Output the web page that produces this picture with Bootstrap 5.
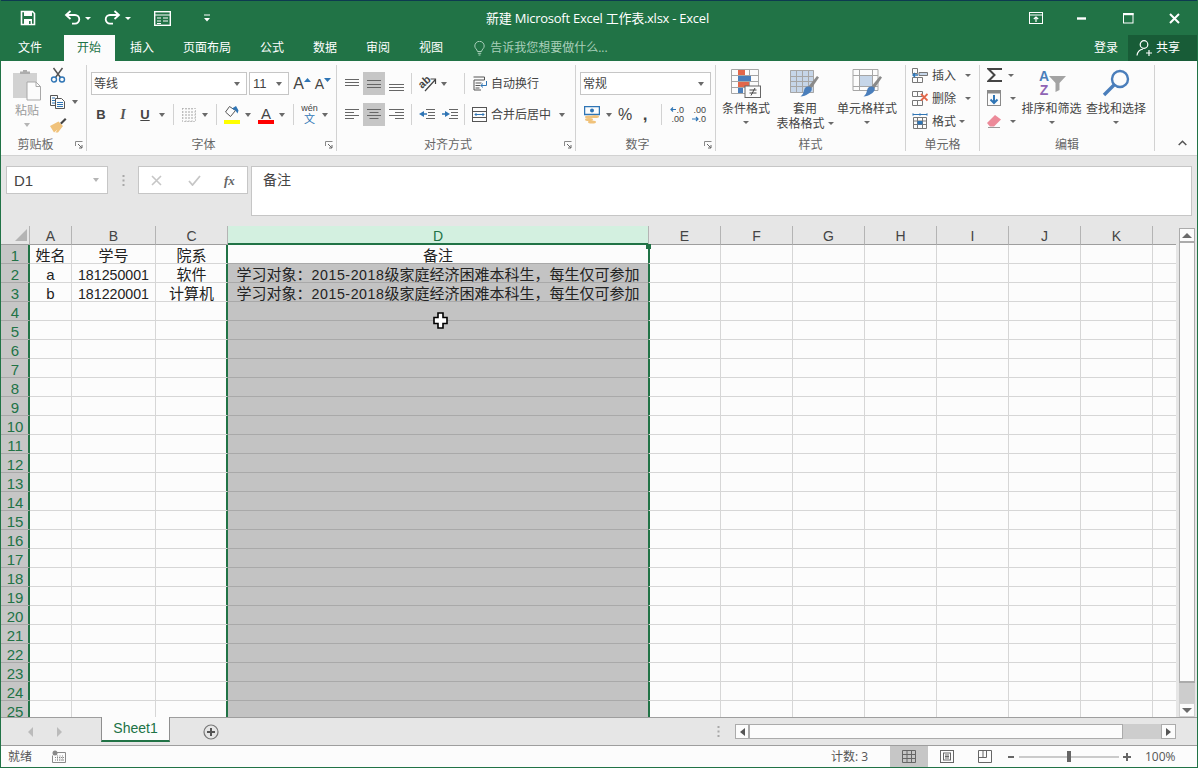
<!DOCTYPE html>
<html lang="zh-CN">
<head>
<meta charset="utf-8">
<title>新建 Microsoft Excel 工作表.xlsx - Excel</title>
<link href="https://cdn.jsdelivr.net/npm/bootstrap@5.3.0/dist/css/bootstrap.min.css" rel="stylesheet">
<style>
:root{--xg:#217346;--xd:#185c37;--xui:"Open Sans","Noto Sans CJK SC",sans-serif;--xcell:"Liberation Sans","Noto Sans CJK SC",sans-serif;}
html,body{margin:0;height:768px;overflow:hidden;background:#fff;}
svg{display:block;flex:none;}
.ov{overflow:visible;}
.xwin{width:1198px;height:768px;border-left:1px solid var(--xg);border-right:1px solid var(--xg);border-bottom:1px solid var(--xg);font-family:var(--xui);color:#444;font-size:12px;line-height:15px;}
.xtitle{height:35px;background:var(--xg);border-top:1px solid #0d3a50;color:#fff;}
.qa{width:300px;height:34px;}
.qa-a{margin-left:19px}.qa-b{margin-left:28px}.qa-c{margin-left:4px}.qa-d{margin-left:13px}.qa-e{margin-left:23px}.qa-h{margin-left:32px}
.wt{flex:1;text-align:center;font-size:13px;line-height:34px;margin-left:-3px;letter-spacing:-.25px;white-space:nowrap;}
.wc{width:300px;height:34px;justify-content:flex-end;}
.wc-a{margin-right:34px}.wc-b{margin-right:37px}.wc-c{margin-right:35px}.wc-d{margin-right:17px}
.ctr-w{border-style:solid;border-width:3px 3px 0;border-color:#fff transparent transparent;width:0;height:0;}
.xtabs{height:26px;background:var(--xg);color:#fff;padding-left:4px;line-height:26px;font-size:12px;}
.xt{padding:0 14px 0 13px;margin-right:2px;height:26px;}
.xt:first-child{margin-right:8px;}
.xt.on{background:#fcfcfc;color:var(--xg);}
.tell{color:#a9cfba;margin-left:15px;}
.tell svg{margin-right:5px;}
.signin{margin-left:auto;margin-right:10px;}
.share{width:69px;height:26px;background:var(--xd);padding-left:8px;}
.share svg{margin-right:2px;}
.xrib{height:95px;background:#fcfcfc;border-bottom:1px solid #d2d2d2;padding-top:4px;}
.gp{height:86px;border-right:1px solid #d2d2d2;flex:none;}
.g1{width:86px}.g2{width:250px}.g3{width:239px}.g4{width:140px}.g5{width:190px}.g6{width:74px}.g7{width:175px;}
.gb{height:72px;flex:none;}
.gl{height:14px;display:grid;grid-template-columns:1fr auto 1fr;color:#666;line-height:15px;text-align:center;font-size:12px;}
.gl.lw{grid-template-columns:1fr auto 1fr 16px;}
.gl svg{justify-self:end;margin:4px 3px 0 0;}
.rw{height:23px;display:flex;align-items:center;}
.rw-1{margin-top:7px}.rw-2{margin-top:8px}
.cl{display:flex;align-items:center;justify-content:center;height:23px;flex:none;}
.w6{width:6px}.w10{width:10px}.w12{width:12px}.w14{width:14px}.w16{width:16px}.w17{width:17px}.w18{width:18px}.w19{width:19px}.w21{width:21px}.w22{width:22px}.w23{width:23px}.w26{width:26px}.w30{width:30px}.w45{width:45px}.w58{width:58px}.w60{width:60px}.w61{width:61px}.w66{width:66px}.w68{width:68px}
.p3{padding-left:3px}.p4{padding-left:4px}
.vs{width:1px;height:21px;background:#d2d2d2;}
.crt{display:block;width:0;height:0;border-style:solid;border-width:4px 3.5px 0;border-color:#6a6a6a transparent transparent;flex:none;}
.combo{height:23px;background:#fff;border:1px solid #c6c6c6;font-size:12px;line-height:21px;display:flex;align-items:center;justify-content:space-between;padding:0 6px 0 2px;flex:none;}
.cb-font{width:156px;margin-left:1px}.cb-size{width:40px;margin-left:2px;padding-left:3px;}
.cb-num{width:131px;margin-left:4px;}
.tb{font-family:"Liberation Sans",sans-serif;font-size:13px;color:#444;line-height:15px;}
.tb-b{font-weight:700}.tb-i{font-style:italic;font-family:"Liberation Serif",serif;font-weight:700;font-size:14px;color:#555}.tb-u{font-weight:700;text-decoration:underline;}
.afont{font-family:"Liberation Sans",sans-serif;color:#444;line-height:16px;}
.afont.lg{font-size:16px}.afont.sm{font-size:14px;}
.afont.hv{font-weight:700;font-size:17px;}
.wen{display:flex;flex-direction:column;align-items:center;font-family:"Liberation Sans","Noto Sans CJK SC",sans-serif;color:#444;}
.wen span{display:block;font-size:9px;line-height:10px;}
.wen b{display:block;font-weight:400;font-size:11px;line-height:13px;color:#2f75b5;}
.on-g{background:#c6c6c6;}
.ml-i{margin-left:4px;}
.p-col{width:44px;margin-left:4px;display:flex;flex-direction:column;align-items:center;flex:none;}
.p-ic{margin-top:3px;height:34px;}
.p-t{color:#9b9b9b;margin-top:1px;font-size:12px;line-height:15px;margin-bottom:5px;}
.crt.dim{border-top-color:#b5b5b5;}
.s-col{display:flex;flex-direction:column;flex:none;margin-left:1px;}
.s-a{margin-top:2px}.s-b{margin-top:11px;display:flex;align-items:center;}.s-c{margin-top:8px;}
.s-b .crt{margin-left:6px;}
.big{display:flex;flex-direction:column;align-items:center;flex:none;line-height:15px;font-size:12px;color:#444;}
.big svg{margin:3px 0 3px;height:30px;}
.big .crt{margin-top:5px;border-width:3.5px 3px 0;}
.big .tl{display:flex;align-items:center;}
.big .tl .crt{margin:0 0 0 3px;}
.c-row{height:20px;display:flex;align-items:center;padding-left:6px;margin-top:3px;}
.c-row:first-child{margin-top:0;}
.c-row svg{margin-right:4px;}
.c-row .crt{margin-left:9px;border-width:3.5px 3px 0;}
.c-row.alt .crt{margin-left:3px;}
.e-row svg{margin-right:5px;}
.e-col{width:41px;flex:none;}
.e-row{padding-left:7px;}
.e-row .crt{margin-left:0;}
.chev{flex:1;display:flex;justify-content:flex-end;align-items:flex-end;padding:0 10px 5px 0;height:86px;}
.xfx{height:70px;background:#e6e6e6;padding:10px 5px 0 5px;flex:none;}
.nbox{width:102px;height:28px;background:#fff;border:1px solid #c6c6c6;font-family:"Liberation Sans",sans-serif;font-size:15px;color:#444;padding:0 8px 0 7px;display:flex;align-items:center;justify-content:space-between;}
.fdots{width:30px;height:28px;display:flex;align-items:center;justify-content:center;}
.fbtn{width:110px;height:28px;background:#fff;border:1px solid #c6c6c6;display:flex;align-items:center;padding-left:12px;}
.fbtn svg{margin-right:26px;}
.fbtn em{font-family:"Liberation Serif",serif;font-style:italic;font-weight:700;font-size:13px;color:#666;margin-left:-3px;}
.finp{flex:1;height:50px;margin-left:3px;background:#fff;border:1px solid #c6c6c6;padding:4px 11px;font-family:var(--xcell);font-size:14px;line-height:18px;color:#444;}
.xsh{height:491px;flex:none;position:relative;}
.tw{width:1175px;height:491px;overflow:hidden;background:#fcfcfc;}
.gt{border-collapse:separate;border-spacing:0;table-layout:fixed;width:1176px;font-family:var(--xcell);color:#222;}
.c29{width:29px}.c42{width:42px}.c84{width:84px}.c72{width:72px}.c421{width:421px}.c24{width:24px}
.gt th,.gt td{height:19px;padding:2px 0 0;text-align:center;white-space:nowrap;overflow:hidden;line-height:15px;font-weight:400;}
.gt td{border-right:1px solid #d6d6d6;border-bottom:1px solid #d6d6d6;font-size:15px;}
.gt thead th{background:#e6e6e6;border-right:1px solid #b4b4b4;border-bottom:1px solid #9e9e9e;font-size:14px;color:#444;}
.gt thead .cnr{padding:0;}
.gt thead .cnr svg{margin-left:14px;}
.gt thead .hd{background:#d3f0e0;color:var(--xg);border-right-color:#b4b4b4;border-bottom-color:var(--xg);box-shadow:inset 0 -1px 0 var(--xg);}
.gt tbody th{background:#c6c6c6;border-right:1px solid var(--xg);border-bottom:1px solid #a8a8a8;box-shadow:inset -1px 0 0 var(--xg);font-size:15px;color:var(--xg);}
.gt tbody .cc{border-right-color:var(--xg);box-shadow:inset -1px 0 0 var(--xg);}
.gt tbody .cd{border-right-color:var(--xg);background:#c3c3c3;border-bottom-color:#a9a9a9;}
.gt tbody .cd1{background:#fcfcfc;border-right-color:var(--xg);border-bottom-color:#a9a9a9;position:relative;overflow:visible;}
.gt tbody .ce{box-shadow:inset 1px 0 0 var(--xg);}
.gt tbody .cz{border-right-color:#9e9e9e;}
.dg{font-size:14.2px;line-height:10px;}
.dg2{font-size:14.2px;letter-spacing:.55px;line-height:10px;}
.pn{font-family:"Noto Sans CJK TC",sans-serif;line-height:10px;}
.handle{position:absolute;right:-3px;top:-1px;width:5px;height:5px;background:var(--xg);}
.ccur{position:absolute;left:432px;top:86px;}
.vbar{width:21px;height:491px;background:#e6e6e6;padding:2px 0 0 3px;flex:none;}
.vb-btn{width:16px;height:15px;background:#fcfcfc;border:1px solid #ababab;display:flex;align-items:center;justify-content:center;}
.vb-up{border-bottom-width:2px;}
.vb-th{width:16px;height:440px;background:#fcfcfc;border:1px solid #ababab;border-top:0;border-bottom-width:2px;}
.vb-tr{width:16px;height:20px;background:#cdcdcd;}
.vb-dn{height:14px;border-color:#d0d0d0;border-width:1px;}
.tri-u{width:0;height:0;border-style:solid;border-width:0 5px 5px;border-color:transparent transparent #6a6a6a;}
.tri-d{width:0;height:0;border-style:solid;border-width:5px 5px 0;border-color:#6a6a6a transparent transparent;}
.tri-l{width:0;height:0;border-style:solid;border-width:4px 5px 4px 0;border-color:transparent #555 transparent transparent;}
.tri-r{width:0;height:0;border-style:solid;border-width:4px 0 4px 5px;border-color:transparent transparent transparent #555;}
.tri-l.dim{border-right-color:#bbb;border-width:5px 5px 5px 0;}
.tri-r.dim{border-left-color:#bbb;border-width:5px 0 5px 5px;}
.xtb{height:28px;background:#e6e6e6;border-top:1px solid #9e9e9e;flex:none;}
.xnav{width:100px;padding-left:27px;height:27px;}
.xnav .tri-r{margin-left:24px;}
.stab{width:69px;height:25px;margin-top:-1px;background:#fcfcfc;border-left:1px solid #8f8f8f;border-right:1px solid #8f8f8f;border-bottom:2px solid var(--xg);color:var(--xg);font-family:"Liberation Sans",sans-serif;font-size:14px;line-height:22px;text-align:center;position:relative;}
.addb{margin-left:33px;}
.xdots{margin-left:498px;}
.hsc{margin-left:15px;width:441px;height:15px;background:#cdcdcd;display:flex;margin-top:6px;}
.hb{width:15px;height:15px;background:#fcfcfc;border:1px solid #ababab;display:flex;align-items:center;justify-content:center;flex:none;}
.hb-l{border-right-width:2px}
.hth{width:373px;height:15px;background:#fcfcfc;border:1px solid #ababab;border-left:0;flex:none;}
.hb-r{margin-left:auto;border-left-width:1px;}
.xst{height:22px;background:#fcfcfc;border-top:1px solid #9e9e9e;flex:none;color:#555;}
.xst .st-r{margin-left:7px;width:24px;}
.st-mac{margin-left:20px;}
.st-cnt{margin-left:765px;width:59px;}
.st-v{width:38px;height:21px;display:flex;align-items:center;justify-content:center;}
.st-v.on{background:#c6c6c6;}
.st-z{margin-left:4px;}
.st-pc{font-family:"Open Sans",sans-serif;margin-left:14px;font-size:12px;}
</style>
</head>
<body>
<div class="xwin d-flex flex-column">

<div class="xtitle d-flex flex-none">
  <div class="qa d-flex align-items-center">
    <svg class="qa-a" width="16" height="16" viewBox="0 0 16 16"><path d="M1.500 1.500h11l2 2v11h-13z" fill="none" stroke="#fff" stroke-width="1.600"/><rect x="4" y="1" width="8" height="5" fill="#fff"/><rect x="4" y="9" width="8" height="5.500" fill="#fff"/><rect x="9" y="11" width="1.600" height="3" fill="#217346"/></svg>
    <svg class="qa-b" width="17" height="16" viewBox="0 0 17 16"><path d="M2 5h9a4.200 4.200 0 0 1 0 8.600H8" fill="none" stroke="#fff" stroke-width="1.800"/><path d="M6.500 1 2 5l4.500 4" fill="none" stroke="#fff" stroke-width="1.800"/></svg>
    <span class="ctr-w qa-c"></span>
    <svg class="qa-d" width="17" height="16" viewBox="0 0 17 16"><path d="M15 5H6a4.200 4.200 0 0 0 0 8.600h3" fill="none" stroke="#fff" stroke-width="1.800"/><path d="M10.500 1 15 5l-4.500 4" fill="none" stroke="#fff" stroke-width="1.800"/></svg>
    <span class="ctr-w qa-c"></span>
    <svg class="qa-e" width="17" height="15" viewBox="0 0 17 15"><rect x=".7" y=".7" width="15.600" height="13.600" fill="none" stroke="#fff" stroke-width="1.400"/><path d="M1 4h15M3 7h4M3 10h4M9 7h5M9 10h5M3 12.500h4" stroke="#fff" stroke-width="1.200"/></svg>
    <svg class="qa-h" width="8" height="8" viewBox="0 0 8 8"><path d="M1 1h6" stroke="#fff"/><path d="M1 4h6L4 7.500z" fill="#fff"/></svg>
  </div>
  <div class="wt">新建 Microsoft Excel 工作表.xlsx - Excel</div>
  <div class="wc d-flex align-items-center">
    <svg class="wc-a" width="14" height="12" viewBox="0 0 14 12"><rect x=".5" y=".5" width="13" height="11" fill="none" stroke="#fff"/><path d="M1 3h12" stroke="#fff"/><path d="M7 10V5M4.800 7 7 5l2.200 2" fill="none" stroke="#fff" stroke-width="1.200"/></svg>
    <svg class="wc-b" width="9" height="3" viewBox="0 0 9 3"><rect width="9" height="2.400" y=".3" fill="#fff"/></svg>
    <svg class="wc-c" width="11" height="11" viewBox="0 0 11 11"><rect x=".5" y=".5" width="9.500" height="9.500" fill="none" stroke="#fff"/><rect width="10.500" height="2.200" fill="#fff"/></svg>
    <svg class="wc-d" width="11" height="11" viewBox="0 0 11 11"><path d="M1 1l9 9M10 1l-9 9" stroke="#fff" stroke-width="2"/></svg>
  </div>
</div>

<div class="xtabs d-flex flex-none">
  <div class="xt">文件</div><div class="xt on">开始</div><div class="xt">插入</div><div class="xt">页面布局</div><div class="xt">公式</div><div class="xt">数据</div><div class="xt">审阅</div><div class="xt">视图</div>
  <div class="tell d-flex align-items-center">
    <svg width="11" height="15" viewBox="0 0 11 15"><path d="M3.500 10.500C3 8 .8 7.500.8 5a4.700 4.700 0 0 1 9.400 0c0 2.500-2.200 3-2.700 5.500z" fill="none" stroke="#a9cfba"/><path d="M3.800 12.300h3.400M4.500 14h2" stroke="#a9cfba"/></svg>
    <span>告诉我您想要做什么...</span>
  </div>
  <div class="signin">登录</div>
  <div class="share d-flex align-items-center">
    <svg width="18" height="18" viewBox="0 0 18 18"><circle cx="8" cy="5.500" r="3.800" fill="none" stroke="#fff" stroke-width="1.200"/><path d="M1 16.500c.5-4 3-6 6-6.500" fill="none" stroke="#fff" stroke-width="1.200"/><path d="M13 11v6M10 14h6" stroke="#fff" stroke-width="1.200"/></svg>
    <span>共享</span>
  </div>
</div>

<div class="xrib d-flex flex-none">
  <div class="gp g1 d-flex flex-column">
    <div class="gb d-flex">
      <div class="p-col">
        <svg class="p-ic" width="30" height="32" viewBox="0 0 30 32"><rect x="1" y="4" width="24" height="25" fill="#d2d2d2"/><path d="M8 5V2.500h3V1h4v1.500h3V5z" fill="#adadad"/><path d="M15 13h9l4.500 4.500V31H15z" fill="#fcfcfc" stroke="#a8a8a8"/><path d="M24 13v4.500h4.500" fill="none" stroke="#a8a8a8"/></svg>
        <div class="p-t">粘贴</div>
        <span class="crt dim"></span>
      </div>
      <div class="s-col">
        <svg class="s-a" width="16" height="16" viewBox="0 0 16 16"><path d="M3.500 1 10.500 10.500M12.500 1 5.500 10.500" stroke="#555" stroke-width="1.500"/><circle cx="4" cy="12.500" r="2.500" fill="none" stroke="#2f75b5" stroke-width="1.400"/><circle cx="12" cy="12.500" r="2.500" fill="none" stroke="#2f75b5" stroke-width="1.400"/></svg>
        <div class="s-b">
          <svg width="16" height="15" viewBox="0 0 16 15"><path d="M.5 1.500h7v10h-7z" fill="#fcfcfc" stroke="#555"/><path d="M5.500 4.500h6l3 3v7h-9z" fill="#fcfcfc" stroke="#555"/><path d="M2 4h3M2 6.500h3M2 9h3M7 8.500h6M7 10.500h6M7 12.500h6" stroke="#2f75b5"/></svg>
          <span class="crt"></span>
        </div>
        <svg class="s-c" width="17" height="16" viewBox="0 0 17 16"><path d="M10 6 15 1l1.500 1.500-5 5z" fill="#444"/><path d="M8.500 4.500 13 9l-5 6.500H5.500l2-3-3.500 3L0 9z" fill="#f0c27b"/></svg>
      </div>
    </div>
    <div class="gl lw"><span></span><span>剪贴板</span><span></span><svg width="8" height="8" viewBox="0 0 8 8"><path d="M.5 5V.5H7.500" fill="none" stroke="#8a8a8a"/><path d="M3 3l4 4M4 7h3V4" fill="none" stroke="#666"/></svg></div>
  </div>

  <div class="gp g2 d-flex flex-column">
    <div class="gb p3">
      <div class="rw rw-1">
        <div class="combo cb-font"><span>等线</span><span class="crt"></span></div>
        <div class="combo cb-size"><span class="tb">11</span><span class="crt"></span></div>
        <div class="cl w26"><span class="afont lg">A</span><svg width="7" height="12" viewBox="0 0 7 12"><path d="M0 4 3.500 0 7 4z" fill="#2f75b5"/></svg></div>
        <div class="cl w16"><span class="afont sm">A</span><svg width="7" height="12" viewBox="0 0 7 12"><path d="M0 0h7L3.500 4z" fill="#2f75b5"/></svg></div>
      </div>
      <div class="rw rw-2">
        <div class="cl w22"><span class="tb tb-b">B</span></div>
        <div class="cl w22"><span class="tb tb-i">I</span></div>
        <div class="cl w22"><span class="tb tb-u">U</span></div>
        <div class="cl w12"><span class="crt"></span></div>
        <div class="cl w10"><span class="vs"></span></div>
        <div class="cl w21"><svg width="14" height="14" viewBox="0 0 14 14"><path d="M.5.500h13v13H.5zM.5 7h13M7 .5v13M4 .5v13M10 .5v13M.5 4h13M.5 10h13" fill="none" stroke="#999" stroke-dasharray="1 2"/></svg></div>
        <div class="cl w12"><span class="crt"></span></div>
        <div class="cl w10"><span class="vs"></span></div>
        <div class="cl w22"><svg width="16" height="19" viewBox="0 0 16 19"><path d="M5.500 1.500 1.500 7l5 4.500 5-6z" fill="#fcfcfc" stroke="#555"/><path d="M8 3.500 12 1l2.500 4.500-1 3-2-3z" fill="#2f75b5"/><rect y="15" width="16" height="4" fill="#ff0"/></svg></div>
        <div class="cl w10"><span class="crt"></span></div>
        <div class="cl w26"><svg width="16" height="19" viewBox="0 0 16 19"><text x="8" y="14" text-anchor="middle" font-family="Liberation Sans" font-size="15" fill="#444">A</text><rect y="15" width="16" height="4" fill="#f00"/></svg></div>
        <div class="cl w6"><span class="crt"></span></div>
        <div class="cl w16"><span class="vs"></span></div>
        <div class="cl w17"><div class="wen"><span>wén</span><b>文</b></div></div>
        <div class="cl w14"><span class="crt"></span></div>
      </div>
    </div>
    <div class="gl lw"><span></span><span>字体</span><span></span><svg width="8" height="8" viewBox="0 0 8 8"><path d="M.5 5V.5H7.500" fill="none" stroke="#8a8a8a"/><path d="M3 3l4 4M4 7h3V4" fill="none" stroke="#666"/></svg></div>
  </div>

  <div class="gp g3 d-flex flex-column">
    <div class="gb p4">
      <div class="rw rw-1">
        <div class="cl w22"><svg width="14" height="14" viewBox="0 0 14 14"><path d="M0 2.500h14M0 5.500h14M0 8.500h14" stroke="#666"/></svg></div>
        <div class="cl w22 on-g"><svg width="14" height="14" viewBox="0 0 14 14"><path d="M0 3.500h14M0 7.500h14M0 10.500h14" stroke="#666"/></svg></div>
        <div class="cl w23"><svg width="15" height="14" viewBox="0 0 15 14"><path d="M0 7.500h15M0 10.500h15M0 13.500h15" stroke="#666"/></svg></div>
        <div class="cl w6"><span class="vs"></span></div>
        <div class="cl w45 justify-content-start"><svg class="ml-i ov" width="19" height="17" viewBox="0 0 19 17"><text x="1" y="12" transform="rotate(-42 5 9)" font-family="Liberation Sans" font-weight="700" font-size="11" fill="#444">ab</text><path d="M7 16 17 5M12.500 4H17.500V9" fill="none" stroke="#444" stroke-width="1.200"/></svg><span class="crt ml-i"></span></div>
        <div class="cl w10"><span class="vs"></span></div>
        <div class="cl p3"><svg width="15" height="15" viewBox="0 0 15 15"><path d="M1.500 1h11v3H2v10h7M3.500 7h6M3.500 9.500h5M3.500 12h4" fill="none" stroke="#555"/><path d="M14.500 5v4.500H9M11 7.500 8.800 9.500l2.200 2" fill="none" stroke="#2f75b5"/></svg></div>
        <div class="ml-i">自动换行</div>
      </div>
      <div class="rw rw-2">
        <div class="cl w22"><svg width="14" height="13" viewBox="0 0 14 13"><path d="M0 1.500h14M0 4.500h9M0 7.500h14M0 10.500h9" stroke="#666"/></svg></div>
        <div class="cl w22 on-g"><svg width="14" height="13" viewBox="0 0 14 13"><path d="M0 1.500h14M2.500 4.500h9M0 7.500h14M2.500 10.500h9" stroke="#666"/></svg></div>
        <div class="cl w23"><svg width="15" height="13" viewBox="0 0 15 13"><path d="M0 1.500h15M6 4.500h9M0 7.500h15M6 10.500h9" stroke="#666"/></svg></div>
        <div class="cl w6"><span class="vs"></span></div>
        <div class="cl w26"><svg width="16" height="13" viewBox="0 0 16 13"><path d="M7 1.500h9M9 4.500h7M9 7.500h7M7 10.500h9" stroke="#666"/><path d="M5 3v6L0 6z" fill="#2f75b5"/><path d="M3 6h5" stroke="#2f75b5" stroke-width="1.500"/></svg></div>
        <div class="cl w19"><svg width="16" height="13" viewBox="0 0 16 13"><path d="M7 1.500h9M9 4.500h7M9 7.500h7M7 10.500h9" stroke="#666"/><path d="M3 3v6l5-3z" fill="#2f75b5"/><path d="M0 6h5" stroke="#2f75b5" stroke-width="1.500"/></svg></div>
        <div class="cl w10"><span class="vs"></span></div>
        <div class="cl p3"><svg width="15" height="15" viewBox="0 0 15 15"><rect x=".5" y=".5" width="14" height="14" fill="none" stroke="#555"/><path d="M1 4.500h13M1 10.500h13" stroke="#555"/><path d="M3 7.500h9M4.500 6 3 7.500 4.500 9M10.500 6 12 7.500 10.500 9" fill="none" stroke="#2f75b5"/></svg></div>
        <div class="ml-i">合并后居中</div>
        <span class="crt ms-2"></span>
      </div>
    </div>
    <div class="gl lw"><span></span><span>对齐方式</span><span></span><svg width="8" height="8" viewBox="0 0 8 8"><path d="M.5 5V.5H7.500" fill="none" stroke="#8a8a8a"/><path d="M3 3l4 4M4 7h3V4" fill="none" stroke="#666"/></svg></div>
  </div>

  <div class="gp g4 d-flex flex-column">
    <div class="gb">
      <div class="rw rw-1">
        <div class="combo cb-num"><span>常规</span><span class="crt"></span></div>
      </div>
      <div class="rw rw-2">
        <div class="cl w30 justify-content-start">
          <svg class="ms-2" width="16" height="18" viewBox="0 0 16 18"><rect x=".5" y=".5" width="15" height="8" fill="#fcfcfc" stroke="#2f75b5" stroke-width="1.500"/><circle cx="8" cy="4.500" r="2" fill="#2f75b5"/><ellipse cx="5" cy="11" rx="4" ry="1.500" fill="#f0c27b"/><ellipse cx="5" cy="13.500" rx="4" ry="1.500" fill="#f0c27b"/><ellipse cx="11" cy="10.500" rx="4" ry="1.500" fill="#f0c27b"/><ellipse cx="8" cy="16" rx="4" ry="1.500" fill="#f0c27b"/></svg>
        </div>
        <div class="cl w6"><span class="crt"></span></div>
        <div class="cl w26"><span class="afont lg">%</span></div>
        <div class="cl w14"><span class="afont hv">,</span></div>
        <div class="cl w18"><span class="vs"></span></div>
        <svg class="ov" width="14" height="17" viewBox="0 0 14 17"><text x="14" y="7" text-anchor="end" font-family="Liberation Sans" font-size="9" fill="#444">.0</text><text x="14" y="16" text-anchor="end" font-family="Liberation Sans" font-size="9" fill="#444">.00</text><path d="M1 3.500h5M3 1.500 1 3.500l2 2" fill="none" stroke="#2f75b5" stroke-width="1.200"/></svg>
        <svg class="ms-2 ov" width="14" height="17" viewBox="0 0 14 17"><text x="14" y="7" text-anchor="end" font-family="Liberation Sans" font-size="9" fill="#444">.00</text><text x="14" y="16" text-anchor="end" font-family="Liberation Sans" font-size="9" fill="#444">.0</text><path d="M0 13h6M4 11l2 2-2 2" fill="none" stroke="#2f75b5" stroke-width="1.200"/></svg>
      </div>
    </div>
    <div class="gl lw"><span></span><span>数字</span><span></span><svg width="8" height="8" viewBox="0 0 8 8"><path d="M.5 5V.5H7.500" fill="none" stroke="#8a8a8a"/><path d="M3 3l4 4M4 7h3V4" fill="none" stroke="#666"/></svg></div>
  </div>

  <div class="gp g5 d-flex flex-column">
    <div class="gb d-flex">
      <div class="big w60">
        <svg width="32" height="30" viewBox="0 0 32 30"><path d="M1.500 1.500h27v24h-27zM1.500 7.500h27M1.500 13.500h27M1.500 19.500h27M10.500 1.500v24M19.500 1.500v24" fill="none" stroke="#a6a6a6"/><rect x="8" y="2" width="7" height="5" fill="#e2674a"/><rect x="8" y="8" width="13" height="5" fill="#4a7ebb"/><rect x="8" y="14" width="11" height="5" fill="#e2674a"/><rect x="8" y="20" width="5" height="5" fill="#4a7ebb"/><rect x="15" y="18" width="15.500" height="11.500" fill="#fcfcfc" stroke="#666"/><path d="M19.500 22h7M19.500 25h7M25 20l-4 7.500" stroke="#444"/></svg>
        <span>条件格式</span>
        <span class="crt"></span>
      </div>
      <div class="big w58">
        <svg width="32" height="30" viewBox="0 0 32 30"><rect x="1" y="2" width="24" height="23" fill="#c6d6e9"/><path d="M1.500 2.500h23v22h-23zM1.500 8.500h23M1.500 13.500h23M1.500 18.500h23M7.500 2.500v22M13.500 2.500v22M19.500 2.500v22" fill="none" stroke="#a6a6a6"/><path d="M19 19l9-11 2 1.500L22 21z" fill="#8a8a8a"/><path d="M19 18.500c3 0 4.500 2 3.500 4s-5 5.500-11 6c2-1.500 3-3.500 3.500-6 .5-2.500 2-4 4-4z" fill="#4a7ebb"/></svg>
        <span class="tl">套用</span>
        <span class="tl">表格格式<span class="crt"></span></span>
      </div>
      <div class="big w66">
        <svg width="32" height="30" viewBox="0 0 32 30"><path d="M2 1.500h25v21H2zM2 7.500h25M8.500 1.500v21M21.500 1.500v21" fill="none" stroke="#a6a6a6"/><rect x="9" y="8" width="12" height="10" fill="#c6d6e9"/><path d="M2 18.500h25" stroke="#a6a6a6"/><path d="M20 19l9-11 2 1.500L23 21z" fill="#8a8a8a"/><path d="M20 18.500c3 0 4.500 2 3.500 4s-5 5.500-11 6c2-1.500 3-3.500 3.500-6 .5-2.500 2-4 4-4z" fill="#4a7ebb"/></svg>
        <span>单元格样式</span>
        <span class="crt"></span>
      </div>
    </div>
    <div class="gl"><span></span><span>样式</span><span></span></div>
  </div>

  <div class="gp g6 d-flex flex-column">
    <div class="gb">
      <div class="c-row">
        <svg width="16" height="16" viewBox="0 0 16 16"><path d="M.5 1.500h5v5h-5zM.5 10.500h5v5h-5zM5.500 10.500h5v5h-5z" fill="none" stroke="#777"/><path d="M7 5.500h8.500v3H7z" fill="#c6d6e9" stroke="#777"/><path d="M1 8h5M3 6 1 8l2 2" fill="none" stroke="#2f75b5" stroke-width="1.400"/></svg>
        <span>插入</span><span class="crt"></span>
      </div>
      <div class="c-row">
        <svg width="16" height="16" viewBox="0 0 16 16"><path d="M.5 1.500h5v5h-5zM.5 10.500h5v5h-5zM5.500 10.500h5v5h-5zM5.500 1.500h5v5h-5z" fill="none" stroke="#777"/><path d="M9 4l6.500 6.500M15.500 4 9 10.500" stroke="#e2674a" stroke-width="1.800"/></svg>
        <span>删除</span><span class="crt"></span>
      </div>
      <div class="c-row alt">
        <svg width="16" height="16" viewBox="0 0 16 16"><path d="M1 1.500h14M1 .3v2.400M15 .3v2.400M8 .3v2.400" fill="none" stroke="#2f75b5"/><path d="M1.500 4.500h13v11h-13zM1.500 8h13M1.500 11.500h13M5.500 4.500v11M10.500 4.500v11" fill="none" stroke="#777"/><rect x="5.500" y="8" width="5" height="3.500" fill="#2f75b5"/></svg>
        <span>格式</span><span class="crt"></span>
      </div>
    </div>
    <div class="gl"><span></span><span>单元格</span><span></span></div>
  </div>

  <div class="gp g7 d-flex flex-column">
    <div class="gb d-flex">
      <div class="e-col">
        <div class="c-row e-row"><svg width="16" height="14" viewBox="0 0 16 14"><path d="M15 1H1.500l6 6-6 6H15" fill="none" stroke="#444" stroke-width="2"/></svg><span class="crt"></span></div>
        <div class="c-row e-row"><svg width="14" height="16" viewBox="0 0 14 16"><rect x=".5" y=".5" width="13" height="15" fill="#fcfcfc" stroke="#8a8a8a"/><rect x="1" y="1" width="12" height="2.500" fill="#8a8a8a"/><path d="M7 5v8M3.500 9.500 7 13l3.500-3.500" fill="none" stroke="#2f75b5" stroke-width="2"/></svg><span class="crt ms-1"></span></div>
        <div class="c-row e-row"><svg width="14" height="14" viewBox="0 0 14 14"><path d="M0 9 8 1l6 4.500-7 7H3z" fill="#ec8a99"/><path d="M1 13.500h12" stroke="#999"/></svg><span class="crt ms-1"></span></div>
      </div>
      <div class="big w61">
        <svg class="ov" width="32" height="30" viewBox="0 0 32 30"><text x="8" y="13" text-anchor="middle" font-family="Liberation Sans" font-weight="700" font-size="14" fill="#4a7ebb">A</text><text x="8" y="27" text-anchor="middle" font-family="Liberation Sans" font-weight="700" font-size="14" fill="#8f64b4">Z</text><path d="M13 8h17l-6.500 7v7l-4 2v-9z" fill="#a3a3a3"/></svg>
        <span>排序和筛选</span>
        <span class="crt"></span>
      </div>
      <div class="big w68">
        <svg width="32" height="30" viewBox="0 0 32 30"><circle cx="20" cy="11" r="8" fill="none" stroke="#4a7ebb" stroke-width="2.400"/><path d="M14 17 4 27" stroke="#4a7ebb" stroke-width="3.400"/></svg>
        <span>查找和选择</span>
        <span class="crt"></span>
      </div>
    </div>
    <div class="gl"><span></span><span>编辑</span><span></span></div>
  </div>
  <div class="chev"><svg width="9" height="6" viewBox="0 0 9 6"><path d="M.7 5 4.500 1.200 8.300 5" fill="none" stroke="#555" stroke-width="1.500"/></svg></div>
</div>

<div class="xfx d-flex">
  <div class="nbox"><span>D1</span><span class="crt dim"></span></div>
  <div class="fdots"><svg width="3" height="11" viewBox="0 0 3 11"><path d="M1.500 0v2M1.500 4.500v2M1.500 9v2" stroke="#a8a8a8" stroke-width="2"/></svg></div>
  <div class="fbtn">
    <svg width="11" height="11" viewBox="0 0 11 11"><path d="M1 1l9 9M10 1l-9 9" stroke="#c6c6c6" stroke-width="1.600"/></svg>
    <svg width="13" height="11" viewBox="0 0 13 11"><path d="M1 6l3.500 4L12 1" fill="none" stroke="#c6c6c6" stroke-width="1.800"/></svg>
    <em>fx</em>
  </div>
  <div class="finp">备注</div>
</div>

<div class="xsh d-flex">
  <div class="tw">
    <table class="gt">
      <colgroup><col class="c29"><col class="c42"><col class="c84"><col class="c72"><col class="c421"><col class="c72"><col class="c72"><col class="c72"><col class="c72"><col class="c72"><col class="c72"><col class="c72"><col class="c24"></colgroup>
      <thead><tr><th class="cnr"><svg width="12" height="12" viewBox="0 0 12 12"><path d="M0 12 12 0v12z" fill="#b4b4b4"/></svg></th><th>A</th><th>B</th><th>C</th><th class="hd">D</th><th>E</th><th>F</th><th>G</th><th>H</th><th>I</th><th>J</th><th>K</th><th></th></tr></thead>
      <tbody>
<tr><th>1</th><td>姓名</td><td>学号</td><td class="cc">院系</td><td class="cd1">备注<span class="handle"></span></td><td class="ce"></td><td></td><td></td><td></td><td></td><td></td><td></td><td class="cz"></td></tr>
<tr><th>2</th><td>a</td><td><span class="dg">181250001</span></td><td class="cc">软件</td><td class="cd">学习对象<span class="pn">：</span><span class="dg2">2015-2018</span>级家庭经济困难本科生，每生仅可参加</td><td class="ce"></td><td></td><td></td><td></td><td></td><td></td><td></td><td class="cz"></td></tr>
<tr><th>3</th><td>b</td><td><span class="dg">181220001</span></td><td class="cc">计算机</td><td class="cd">学习对象<span class="pn">：</span><span class="dg2">2015-2018</span>级家庭经济困难本科生，每生仅可参加</td><td class="ce"></td><td></td><td></td><td></td><td></td><td></td><td></td><td class="cz"></td></tr>
<tr><th>4</th><td></td><td></td><td class="cc"></td><td class="cd"></td><td class="ce"></td><td></td><td></td><td></td><td></td><td></td><td></td><td class="cz"></td></tr>
<tr><th>5</th><td></td><td></td><td class="cc"></td><td class="cd"></td><td class="ce"></td><td></td><td></td><td></td><td></td><td></td><td></td><td class="cz"></td></tr>
<tr><th>6</th><td></td><td></td><td class="cc"></td><td class="cd"></td><td class="ce"></td><td></td><td></td><td></td><td></td><td></td><td></td><td class="cz"></td></tr>
<tr><th>7</th><td></td><td></td><td class="cc"></td><td class="cd"></td><td class="ce"></td><td></td><td></td><td></td><td></td><td></td><td></td><td class="cz"></td></tr>
<tr><th>8</th><td></td><td></td><td class="cc"></td><td class="cd"></td><td class="ce"></td><td></td><td></td><td></td><td></td><td></td><td></td><td class="cz"></td></tr>
<tr><th>9</th><td></td><td></td><td class="cc"></td><td class="cd"></td><td class="ce"></td><td></td><td></td><td></td><td></td><td></td><td></td><td class="cz"></td></tr>
<tr><th>10</th><td></td><td></td><td class="cc"></td><td class="cd"></td><td class="ce"></td><td></td><td></td><td></td><td></td><td></td><td></td><td class="cz"></td></tr>
<tr><th>11</th><td></td><td></td><td class="cc"></td><td class="cd"></td><td class="ce"></td><td></td><td></td><td></td><td></td><td></td><td></td><td class="cz"></td></tr>
<tr><th>12</th><td></td><td></td><td class="cc"></td><td class="cd"></td><td class="ce"></td><td></td><td></td><td></td><td></td><td></td><td></td><td class="cz"></td></tr>
<tr><th>13</th><td></td><td></td><td class="cc"></td><td class="cd"></td><td class="ce"></td><td></td><td></td><td></td><td></td><td></td><td></td><td class="cz"></td></tr>
<tr><th>14</th><td></td><td></td><td class="cc"></td><td class="cd"></td><td class="ce"></td><td></td><td></td><td></td><td></td><td></td><td></td><td class="cz"></td></tr>
<tr><th>15</th><td></td><td></td><td class="cc"></td><td class="cd"></td><td class="ce"></td><td></td><td></td><td></td><td></td><td></td><td></td><td class="cz"></td></tr>
<tr><th>16</th><td></td><td></td><td class="cc"></td><td class="cd"></td><td class="ce"></td><td></td><td></td><td></td><td></td><td></td><td></td><td class="cz"></td></tr>
<tr><th>17</th><td></td><td></td><td class="cc"></td><td class="cd"></td><td class="ce"></td><td></td><td></td><td></td><td></td><td></td><td></td><td class="cz"></td></tr>
<tr><th>18</th><td></td><td></td><td class="cc"></td><td class="cd"></td><td class="ce"></td><td></td><td></td><td></td><td></td><td></td><td></td><td class="cz"></td></tr>
<tr><th>19</th><td></td><td></td><td class="cc"></td><td class="cd"></td><td class="ce"></td><td></td><td></td><td></td><td></td><td></td><td></td><td class="cz"></td></tr>
<tr><th>20</th><td></td><td></td><td class="cc"></td><td class="cd"></td><td class="ce"></td><td></td><td></td><td></td><td></td><td></td><td></td><td class="cz"></td></tr>
<tr><th>21</th><td></td><td></td><td class="cc"></td><td class="cd"></td><td class="ce"></td><td></td><td></td><td></td><td></td><td></td><td></td><td class="cz"></td></tr>
<tr><th>22</th><td></td><td></td><td class="cc"></td><td class="cd"></td><td class="ce"></td><td></td><td></td><td></td><td></td><td></td><td></td><td class="cz"></td></tr>
<tr><th>23</th><td></td><td></td><td class="cc"></td><td class="cd"></td><td class="ce"></td><td></td><td></td><td></td><td></td><td></td><td></td><td class="cz"></td></tr>
<tr><th>24</th><td></td><td></td><td class="cc"></td><td class="cd"></td><td class="ce"></td><td></td><td></td><td></td><td></td><td></td><td></td><td class="cz"></td></tr>
<tr><th>25</th><td></td><td></td><td class="cc"></td><td class="cd"></td><td class="ce"></td><td></td><td></td><td></td><td></td><td></td><td></td><td class="cz"></td></tr>
      </tbody>
    </table>
  </div>
  <svg class="ccur" width="15" height="17" viewBox="0 0 15 17"><path d="M5 1h5v4.500h4v6h-4V16H5v-4.500H1v-6h4z" fill="#fff" stroke="#000" stroke-width="1.600"/></svg>
  <div class="vbar d-flex flex-column">
    <div class="vb-btn vb-up"><span class="tri-u"></span></div>
    <div class="vb-th"></div>
    <div class="vb-tr"></div>
    <div class="vb-btn vb-dn"><span class="tri-d"></span></div>
  </div>
</div>

<div class="xtb d-flex">
  <div class="xnav d-flex align-items-center"><span class="tri-l dim"></span><span class="tri-r dim"></span></div>
  <div class="stab">Sheet1</div>
  <svg class="addb align-self-center" width="16" height="16" viewBox="0 0 16 16"><circle cx="8" cy="8" r="7" fill="none" stroke="#777" stroke-width="1.200"/><path d="M8 4v8M4 8h8" stroke="#555" stroke-width="2"/></svg>
  <svg class="xdots align-self-center" width="3" height="11" viewBox="0 0 3 11"><path d="M1.500 0v2M1.500 4.500v2M1.500 9v2" stroke="#a8a8a8" stroke-width="2"/></svg>
  <div class="hsc">
    <div class="hb hb-l"><span class="tri-l"></span></div>
    <div class="hth"></div>
    <div class="hb hb-r"><span class="tri-r"></span></div>
  </div>
</div>

<div class="xst d-flex align-items-center">
  <span class="st-r">就绪</span>
  <svg class="st-mac" width="14" height="13" viewBox="0 0 14 13"><circle cx="3" cy="3" r="2.500" fill="#8a8a8a"/><path d="M5 2.500h8.500v10h-13V5.500" fill="none" stroke="#8a8a8a"/><path d="M3 7.500h9M3 10h9M5.500 5.500v6M8 5.500v6M10.500 5.500v6" stroke="#8a8a8a" stroke-dasharray="1 1"/></svg>
  <span class="st-cnt">计数: 3</span>
  <div class="st-v on"><svg width="14" height="13" viewBox="0 0 14 13"><path d="M.5.500h13v12H.5zM.5 4.500h13M.5 8.500h13M5 .5v12M9.500.5v12" fill="none" stroke="#666"/></svg></div>
  <div class="st-v"><svg width="14" height="13" viewBox="0 0 14 13"><rect x=".5" y=".5" width="13" height="12" fill="none" stroke="#666"/><rect x="3.500" y="3" width="7" height="7" fill="none" stroke="#666"/><path d="M5 5h4M5 6.500h4M5 8h4" stroke="#666"/></svg></div>
  <div class="st-v"><svg width="14" height="13" viewBox="0 0 14 13"><path d="M.5.500h13v12H.5zM.5 7.500h8V.5M5 .5v7" fill="none" stroke="#666"/></svg></div>
  <svg class="st-z" width="123" height="12" viewBox="0 0 123 12"><path d="M0 6h6" stroke="#666" stroke-width="2"/><path d="M11 6h100" stroke="#999"/><rect x="59" y="0" width="4" height="11" fill="#666"/><path d="M115 6h8M119 2v8" stroke="#666" stroke-width="2"/></svg>
  <span class="st-pc">100%</span>
</div>

</div>
</body>
</html>
